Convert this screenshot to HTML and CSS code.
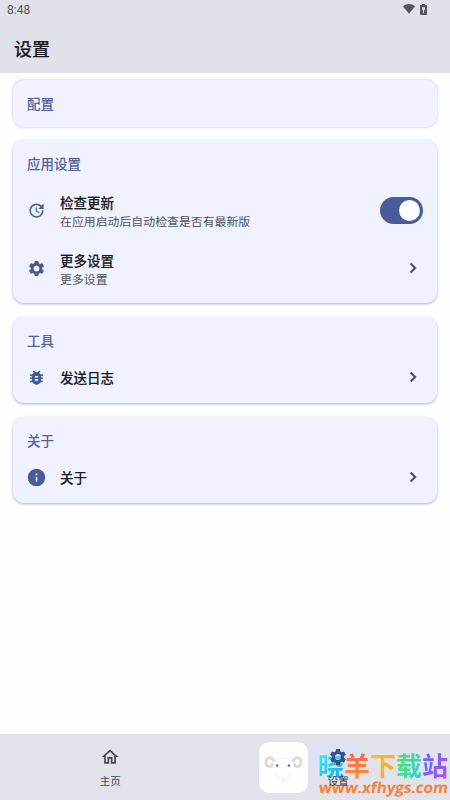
FILE: index.html
```html
<!DOCTYPE html>
<html lang="zh-CN">
<head>
<meta charset="utf-8">
<title>设置</title>
<link rel="stylesheet" href="styles.css">
</head>
<body>
<svg class="defs" aria-hidden="true">
  <symbol id="gear" viewBox="0 0 24 24"><path d="M19.14 12.94c.04-.3.06-.61.06-.94s-.02-.64-.07-.94l2.03-1.58c.18-.14.23-.41.12-.61l-1.92-3.32c-.12-.22-.37-.29-.59-.22l-2.39.96c-.5-.38-1.03-.7-1.62-.94l-.36-2.54c-.04-.24-.24-.41-.48-.41h-3.84c-.24 0-.43.17-.47.41l-.36 2.54c-.59.24-1.13.57-1.62.94l-2.39-.96c-.22-.08-.47 0-.59.22L2.74 8.87c-.12.21-.08.47.12.61l2.03 1.58c-.05.3-.09.63-.09.94s.02.64.07.94l-2.03 1.58c-.18.14-.23.41-.12.61l1.92 3.32c.12.22.37.29.59.22l2.39-.96c.5.38 1.03.7 1.62.94l.36 2.54c.05.24.24.41.48.41h3.84c.24 0 .44-.17.47-.41l.36-2.54c.59-.24 1.13-.56 1.62-.94l2.39.96c.22.08.47 0 .59-.22l1.92-3.32c.12-.22.07-.47-.12-.61zM12 15.6A3.6 3.6 0 1 1 12 8.4a3.6 3.6 0 0 1 0 7.2z"/></symbol>
  <symbol id="chevron" viewBox="0 0 24 24"><path d="M10 6 8.59 7.41 13.17 12l-4.58 4.59L10 18l6-6z"/></symbol>
</svg>
<header class="top">
  <div class="status">
    <span>8:48</span>
    <div class="status-icons">
      <svg class="wifi" viewBox="0 0 12 10"><path d="M0 2.5C3.3-.7 8.7-.7 12 2.5L6 9.8z"/></svg>
      <svg class="battery" viewBox="0 0 7 11"><path fill-rule="evenodd" d="M2 0h3v1h1.2q.8 0 .8.8v8.4q0 .8-.8.8H.8Q0 11 0 10.200V1.800Q0 1 .8 1H2zM2 3.200v2.500h1V9h1V5.700h1V3.200z"/></svg>
    </div>
  </div>
  <h1>设置</h1>
</header>
<main>
  <section class="card"><h2>配置</h2></section>
  <section class="card">
    <h2>应用设置</h2>
    <div class="row tall">
      <svg class="icon" viewBox="0 0 24 24"><path d="M21 10.120h-6.780l2.740-2.820c-2.730-2.700-7.150-2.800-9.880-.1a6.875 6.875 0 0 0 0 9.790c2.730 2.710 7.150 2.710 9.880 0C18.320 15.650 19 14.080 19 12.100h2c0 1.980-.88 4.550-2.640 6.290-3.510 3.480-9.210 3.480-12.720 0a8.950 8.950 0 0 1-.02-12.580c3.510-3.470 9.140-3.470 12.650 0L21 3zM12.500 8v4.250l3.500 2.080-.72 1.210L11 13V8z"/></svg>
      <div class="text"><b>检查更新</b><small>在应用启动后自动检查是否有最新版</small></div>
      <span class="switch"></span>
    </div>
    <div class="row tall">
      <svg class="icon"><use href="#gear"/></svg>
      <div class="text"><b>更多设置</b><small>更多设置</small></div>
      <svg class="chevron"><use href="#chevron"/></svg>
    </div>
  </section>
  <section class="card">
    <h2>工具</h2>
    <div class="row">
      <svg class="icon" viewBox="0 0 24 24"><path d="M20 8h-2.810c-.45-.78-1.070-1.450-1.820-1.960L17 4.410 15.590 3l-2.170 2.170C12.960 5.060 12.490 5 12 5s-.96.06-1.410.17L8.410 3 7 4.410l1.620 1.630C7.880 6.550 7.260 7.220 6.810 8H4v2h2.090c-.05.33-.09.66-.09 1v1H4v2h2v1c0 .34.040.67.090 1H4v2h2.810c1.040 1.790 2.970 3 5.190 3s4.150-1.210 5.190-3H20v-2h-2.090c.05-.33.090-.66.090-1v-1h2v-2h-2v-1c0-.34-.04-.67-.09-1H20zm-6 8h-4v-2h4zm0-4h-4v-2h4z"/></svg>
      <div class="text"><b>发送日志</b></div>
      <svg class="chevron"><use href="#chevron"/></svg>
    </div>
  </section>
  <section class="card">
    <h2>关于</h2>
    <div class="row">
      <svg class="icon" viewBox="0 0 24 24"><path d="M12 1a11 11 0 1 0 0 22 11 11 0 0 0 0-22zm1 16h-2v-6h2zm0-8h-2V7h2z"/></svg>
      <div class="text"><b>关于</b></div>
      <svg class="chevron"><use href="#chevron"/></svg>
    </div>
  </section>
</main>
<nav>
  <a class="tab">
    <span class="pill"><svg viewBox="0 0 24 24"><path d="m12 5.690 5 4.500V18h-2v-6H9v6H7v-7.810zM12 3 2 12h3v8h6v-6h2v6h6v-8h3z"/></svg></span>
    <span class="label">主页</span>
  </a>
  <a class="tab active">
    <span class="pill"><svg><use href="#gear"/></svg></span>
    <span class="label">设置</span>
  </a>
  <div class="brand">
    <svg class="sheep" viewBox="0 0 50 50">
      <g fill="none" stroke-linecap="round">
        <g stroke="#dedbd2" stroke-width="3"><path d="M15 18C12 13 6 15 7.500 21c1 4 6 4 6 1"/><path d="M35 18c3-5 9-3 7.500 3-1 4-6 4-6 1"/></g>
        <g stroke="#f7f6f3" stroke-width="1"><path d="M16 18q9-6 18 0M17 29q2 9 8 11 6-2 8-11"/></g>
        <path d="m23 36 2 1.500 2-1.500M25 37.500v1.500" stroke="#e5d5d2" stroke-width=".8"/>
      </g>
      <g fill="#68717a"><circle cx="18.500" cy="23" r="1.300"/><circle cx="30.500" cy="23" r="1.300"/></g>
    </svg>
    <div class="mark"><div class="name"><i>晓</i><i>羊</i><i>下</i><i>载</i><i>站</i></div><div class="url">www.xfhygs.com</div></div>
  </div>
</nav>
</body>
</html>
```

FILE: styles.css
```css
* { box-sizing: border-box; }
body {
  margin: 0;
  height: 800px;
  display: flex;
  flex-direction: column;
  overflow: hidden;
  background: #fefefe;
  color: #1b1c22;
  font-family: "Noto Sans CJK SC", sans-serif;
}
.defs { position: absolute; width: 0; height: 0; }
svg { display: block; fill: currentColor; }
.top { height: 73px; background: #e1e1ea; }
.status {
  height: 20px;
  padding: 0 23px 0 7px;
  display: flex;
  align-items: center;
  justify-content: space-between;
  color: #55565d;
  font: 12px/20px Roboto, sans-serif;
}
.status-icons { display: flex; align-items: center; gap: 5px; margin-top: -2px; }
.wifi { width: 12px; height: 10px; }
.battery { width: 7px; height: 11px; }
h1 { margin: 14px 0 0 14px; font-size: 18px; line-height: 28px; font-weight: 500; -webkit-text-stroke: .15px; }
main {
  flex: 1;
  padding: 7px 13px 0;
  display: flex;
  flex-direction: column;
  gap: 14px;
}
.card {
  padding: 13px 14px 12px;
  border-radius: 11px;
  background: #f0f3ff;
  box-shadow: 0 1px 3px #0000004d;
}
.card:first-child { height: 47px; margin-bottom: -1px; box-shadow: 0 0 3px #0000003d; }
h2 { margin: 0; font-size: 13.500px; line-height: 20px; font-weight: 500; color: #5262a0; }
.row { height: 40px; margin-top: 7px; display: flex; align-items: center; }
.row.tall { height: 58px; margin: 0; }
.row.tall:nth-child(2) { margin-top: 8px; }
.card:nth-child(2) { height: 163px; }
.card:nth-child(n+3) { height: 86px; }
.icon { width: 19px; height: 19px; color: #485b98; }
.text { flex: 1; margin-left: 14px; display: flex; flex-direction: column; }
.tall .text { padding-top: 3px; }
b { font-size: 13.500px; line-height: 19px; font-weight: 500; -webkit-text-stroke: .15px; }
small { font-size: 11.900px; line-height: 18px; color: #50525c; }
.chevron { width: 20px; height: 20px; color: #45474f; stroke: currentColor; stroke-width: .5px; }
.switch { width: 43px; height: 27px; padding: 3px; border-radius: 14px; background: #495b98; }
.switch::after { content: ""; display: block; width: 21px; height: 21px; margin-left: auto; border-radius: 50%; background: #fff; }
nav {
  position: relative;
  height: 66px;
  display: flex;
  background: #e2e2eb;
  color: #44464f;
}
.tab {
  width: 222px;
  padding-top: 9px;
  display: flex;
  flex-direction: column;
  align-items: center;
}
.tab.active { width: 228px; margin-left: 3px; }
.pill { width: 57px; height: 28px; display: grid; place-items: center; border-radius: 14px; }
.pill svg { width: 20px; height: 20px; }
.active .pill { background: #dfe1f7; color: #3b4f8b; }
.active svg, .active .label { position: relative; z-index: 2; }
.active .label { color: #34363e; }
.label { margin-top: 2px; font-size: 10.500px; line-height: 16px; }
.brand { position: absolute; left: 259px; top: 8px; display: flex; }
.sheep { width: 49px; height: 51px; border-radius: 10px; background: #fefefe; }
.mark { margin: 8px 0 0 10px; width: 131px; }
.name { display: flex; height: 29px; font-size: 26px; line-height: 29px; font-weight: 700; }
i { width: 26px; font-style: normal; color: transparent; background-clip: text; }
i:nth-child(1) { background-image: linear-gradient(135deg, #21f3e8 20%, #169fff); }
i:nth-child(2) { background-image: linear-gradient(#ff5f45, #ff9330); }
i:nth-child(3) { background-image: linear-gradient(135deg, #ffc21c, #f4a43b); }
i:nth-child(4) { background-image: linear-gradient(110deg, #5be35c, #20d5dc); }
i:nth-child(5) { background-image: linear-gradient(110deg, #4f73ff, #b34cf3); }
.url { margin: -1px 0 0 1px; font: 700 15.200px/18px "Open Sans", sans-serif; color: #f48138; white-space: nowrap; transform: skewX(-8deg); }

.tab.active { padding-left: 3px; }
```
